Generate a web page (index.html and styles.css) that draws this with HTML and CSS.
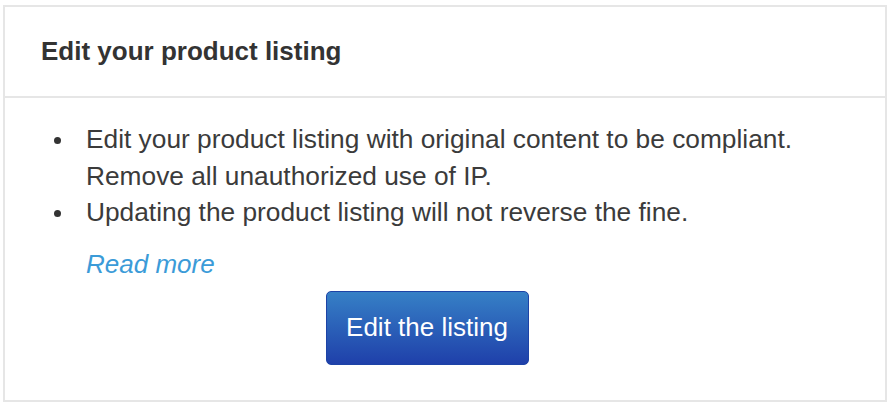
FILE: index.html
```html
<!DOCTYPE html>
<html lang="en">
<head>
  <meta charset="UTF-8">
  <title>Edit your product listing</title>
  <link rel="stylesheet" href="styles.css">
</head>
<body>
  <div class="panel">
    <div class="panel-heading">
      <h3>Edit your product listing</h3>
    </div>
    <div class="panel-body">
      <ul class="steps">
        <li>Edit your product listing with original content to be compliant. Remove all unauthorized use of IP.</li>
        <li>Updating the product listing will not reverse the fine.</li>
      </ul>
      <a class="read-more" href="#">Read more</a>
      <div class="actions">
        <button type="button" class="btn-primary">Edit the listing</button>
      </div>
    </div>
  </div>
</body>
</html>
```

FILE: styles.css
```css
body {
  margin: 0;
  padding: 5px 5px 7px 3px;
  background: white;
  font-family: 'Liberation Sans', Arial, sans-serif;
  color: #333;
}

.panel {
  border: 2px solid #e6e6e6;
  background: white;
}

.panel-heading {
  padding: 0 36px;
  height: 89px;
  display: flex;
  align-items: center;
  border-bottom: 2px solid #e6e6e6;
}

.panel-heading h3 {
  margin: 0;
  font-size: 26px;
  font-weight: bold;
  color: #333;
}

.panel-body {
  padding: 23px 36px 35px;
}

.steps {
  margin: 0;
  padding-left: 45px;
  padding-right: 40px;
  list-style: none;
  font-size: 26.3px;
  line-height: 36.5px;
  color: #3b3b3b;
}

.steps li {
  position: relative;
}

.steps li::before {
  content: "";
  position: absolute;
  left: -32px;
  top: 16px;
  width: 7px;
  height: 7px;
  border-radius: 50%;
  background: #333;
}

.read-more {
  display: block;
  margin: 15px 0 0 45px;
  font-size: 26px;
  line-height: 36px;
  font-style: italic;
  color: #3b9bd8;
  text-decoration: none;
}

.actions {
  display: flex;
  justify-content: center;
  margin-top: 9px;
  padding-right: 36px;
}

.btn-primary {
  width: 203px;
  height: 74px;
  border: 1px solid #1d43a6;
  border-radius: 5px;
  background: linear-gradient(#3680c6, #1f40aa);
  color: white;
  font-family: 'Liberation Sans', Arial, sans-serif;
  font-size: 26px;
  cursor: pointer;
}
```
